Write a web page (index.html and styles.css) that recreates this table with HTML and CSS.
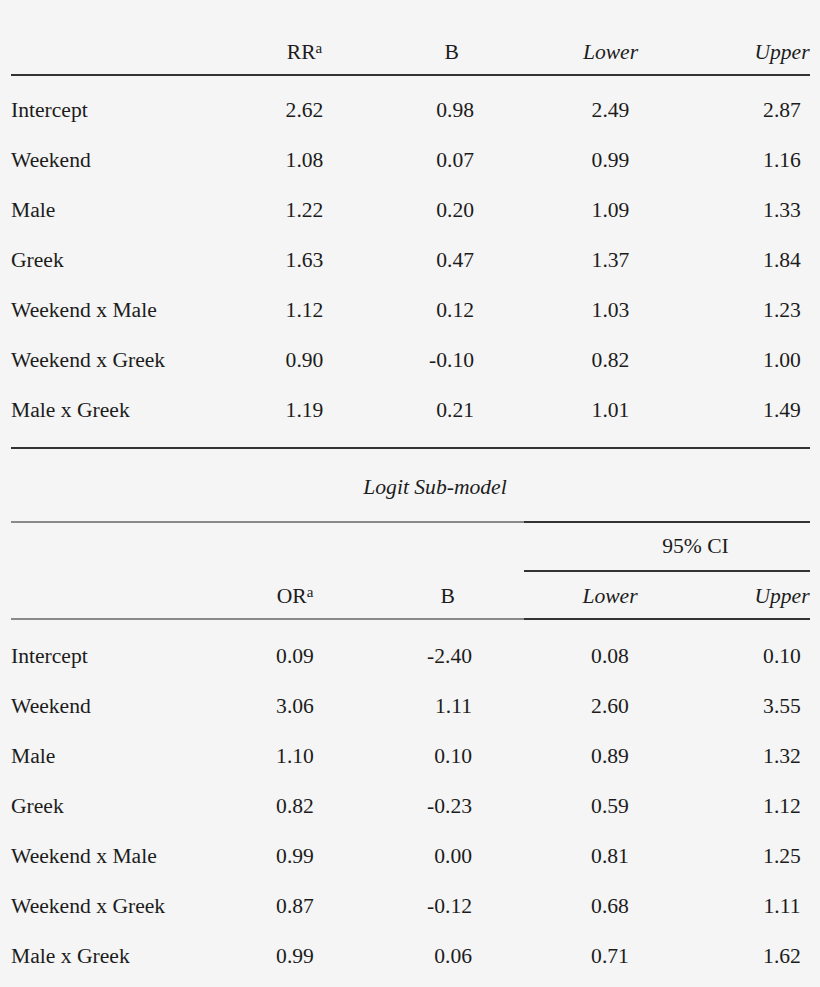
FILE: index.html
```html
<!DOCTYPE html>
<html>
<head>
<meta charset="utf-8">
<link rel="stylesheet" href="styles.css">
</head>
<body>
<div class="page">
  <div class="t1">
    <div class="row head1">
      <span></span>
      <span class="c">RR<span class="sup">a</span></span>
      <span class="r hb1">B</span>
      <span class="c it">Lower</span>
      <span class="up1 it">Upper</span>
    </div>
    <div class="body1">
      <div class="row data"><span>Intercept</span><span class="c">2.62</span><span class="r">0.98</span><span class="c">2.49</span><span class="up1">2.87</span></div>
      <div class="row data"><span>Weekend</span><span class="c">1.08</span><span class="r">0.07</span><span class="c">0.99</span><span class="up1">1.16</span></div>
      <div class="row data"><span>Male</span><span class="c">1.22</span><span class="r">0.20</span><span class="c">1.09</span><span class="up1">1.33</span></div>
      <div class="row data"><span>Greek</span><span class="c">1.63</span><span class="r">0.47</span><span class="c">1.37</span><span class="up1">1.84</span></div>
      <div class="row data"><span>Weekend x Male</span><span class="c">1.12</span><span class="r">0.12</span><span class="c">1.03</span><span class="up1">1.23</span></div>
      <div class="row data"><span>Weekend x Greek</span><span class="c">0.90</span><span class="r">-0.10</span><span class="c">0.82</span><span class="up1">1.00</span></div>
      <div class="row data"><span>Male x Greek</span><span class="c">1.19</span><span class="r">0.21</span><span class="c">1.01</span><span class="up1">1.49</span></div>
    </div>
  </div>

  <div class="title">Logit Sub-model</div>

  <div class="t2">
    <div class="row head2a">
      <span class="blank gray-top"></span>
      <span class="ci">95% CI</span>
    </div>
    <div class="row head2b">
      <span class="gray-bot"></span>
      <span class="c gray-bot">OR<span class="sup">a</span></span>
      <span class="r hb2 gray-bot">B</span>
      <span class="gray-bot"></span>
      <span class="c it dark-bot">Lower</span>
      <span class="up2 it dark-bot">Upper</span>
    </div>
    <div class="body2">
      <div class="row data"><span>Intercept</span><span class="c">0.09</span><span class="r">-2.40</span><span></span><span class="c">0.08</span><span class="up2">0.10</span></div>
      <div class="row data"><span>Weekend</span><span class="c">3.06</span><span class="r">1.11</span><span></span><span class="c">2.60</span><span class="up2">3.55</span></div>
      <div class="row data"><span>Male</span><span class="c">1.10</span><span class="r">0.10</span><span></span><span class="c">0.89</span><span class="up2">1.32</span></div>
      <div class="row data"><span>Greek</span><span class="c">0.82</span><span class="r">-0.23</span><span></span><span class="c">0.59</span><span class="up2">1.12</span></div>
      <div class="row data"><span>Weekend x Male</span><span class="c">0.99</span><span class="r">0.00</span><span></span><span class="c">0.81</span><span class="up2">1.25</span></div>
      <div class="row data"><span>Weekend x Greek</span><span class="c">0.87</span><span class="r">-0.12</span><span></span><span class="c">0.68</span><span class="up2">1.11</span></div>
      <div class="row data"><span>Male x Greek</span><span class="c">0.99</span><span class="r">0.06</span><span></span><span class="c">0.71</span><span class="up2">1.62</span></div>
    </div>
  </div>
</div>
</body>
</html>
```
FILE: styles.css
```css
html, body {
  margin: 0;
  padding: 0;
  background: #f5f5f5;
}
body {
  color: #1c1c1c;
  font-family: "Liberation Serif", "Times New Roman", serif;
  font-size: 21.6px;
}
.page {
  margin-left: 11px;
  width: 799px;
  padding-top: 30px;
}
.row > span {
  white-space: nowrap;
}
.t1 .row {
  display: grid;
  grid-template-columns: 234px 119px 110px 273px 63px;
}
.t2 .row {
  display: grid;
  grid-template-columns: 234px 100px 127px 52px 172px 114px;
}
.c { text-align: center; }
.r { text-align: right; }
.it { font-style: italic; }
.up1 { text-align: center; padding-left: 7px; }
.up2 { text-align: center; padding-left: 58px; }
.hb1 { padding-right: 15px; }
.hb2 { padding-right: 17px; }
.sup {
  font-size: 15px;
  line-height: 0;
  vertical-align: 6px;
}
.head1 {
  line-height: 44px;
  border-bottom: 2px solid #333;
}
.body1 {
  padding-top: 9px;
  padding-bottom: 12px;
  border-bottom: 2px solid #333;
}
.data {
  line-height: 50px;
  height: 50px;
}
.title {
  font-style: italic;
  text-align: center;
  padding-left: 49px;
  padding-top: 4px;
  line-height: 68px;
}
.head2a .blank {
  grid-column: 1 / 5;
}
.gray-top {
  border-top: 2px solid #8a8a8a;
}
.head2a .ci {
  grid-column: 5 / 7;
  border-top: 2px solid #333;
  border-bottom: 2px solid #333;
  line-height: 47px;
  text-align: center;
  padding-left: 57px;
}
.head2b > span {
  padding-top: 2px;
  line-height: 44px;
}
.gray-bot {
  border-bottom: 2px solid #8a8a8a;
}
.dark-bot {
  border-bottom: 2px solid #333;
}
.body2 {
  padding-top: 11px;
}
```
